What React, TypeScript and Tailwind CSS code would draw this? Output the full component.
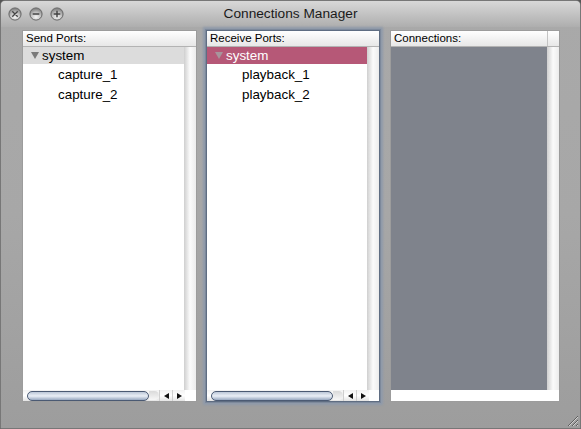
import React from 'react';

const FONT = { fontFamily: '"Liberation Sans", Arial, sans-serif' };

// graphite title bar buttons
function WinButton({ kind }: { kind: 'close' | 'min' | 'zoom' }) {
  return (
    <svg width="14" height="14" viewBox="0 0 14 14">
      <defs>
        <radialGradient id={`wb-${kind}`} cx="50%" cy="75%" r="65%">
          <stop offset="0%" stopColor="#f4f4f4" />
          <stop offset="60%" stopColor="#c0c0c0" />
          <stop offset="100%" stopColor="#888" />
        </radialGradient>
      </defs>
      <circle cx="7" cy="7" r="6.1" fill={`url(#wb-${kind})`} stroke="#5f5f5f" strokeWidth="0.9" />
      {kind === 'close' && (
        <path d="M4.7 4.7 L9.3 9.3 M9.3 4.7 L4.7 9.3" stroke="#444" strokeWidth="1.3" strokeLinecap="round" />
      )}
      {kind === 'min' && <path d="M4.2 7 H9.8" stroke="#444" strokeWidth="1.5" strokeLinecap="round" />}
      {kind === 'zoom' && (
        <path d="M4.2 7 H9.8 M7 4.2 V9.8" stroke="#444" strokeWidth="1.5" strokeLinecap="round" />
      )}
    </svg>
  );
}

const Triangle = ({ color }: { color: string }) => (
  <svg width="8" height="7" viewBox="0 0 8 7">
    <polygon points="0,0 8,0 4,7" fill={color} />
  </svg>
);

const Header = ({ label, extra }: { label: string; extra?: boolean }) => (
  <div className="flex h-[16px] shrink-0 border-b border-[#b3b3b3] bg-gradient-to-b from-white to-[#e7e7e7]">
    <div className="flex-1 pl-[3px] text-[11.5px] leading-[15px] text-black">{label}</div>
    <div className={extra ? 'w-[12px] border-l border-[#c4c4c4]' : 'w-0'} />
  </div>
);

const VStrip = () => (
  <div className="w-[12px] shrink-0 bg-gradient-to-r from-[#cfcfcf] via-[#fbfbfb] to-[#ececec]" />
);

const HScroll = () => (
  <div className="flex h-[11px] shrink-0 bg-white">
    <div className="flex flex-1 items-center bg-gradient-to-b from-[#f2f2f2] via-white to-[#e4e4e4] pl-[4px]">
      <div className="h-[10px] w-[122px] rounded-full border border-[#4b5a73] bg-gradient-to-b from-[#bcc7d8] via-[#eaeff6] to-[#98a8c0]" />
      <div className="h-[9px] w-[10px] rounded-r-full bg-gradient-to-b from-[#dadada] to-[#f7f7f7]" />
      <div className="flex-1" />
      <div className="flex h-full w-[13px] items-center justify-center border-l border-[#cfcfcf]">
        <svg width="5" height="6" viewBox="0 0 5 6">
          <polygon points="5,0 5,6 0,3" fill="#111" />
        </svg>
      </div>
      <div className="flex h-full w-[13px] items-center justify-center border-l border-[#cfcfcf]">
        <svg width="5" height="6" viewBox="0 0 5 6">
          <polygon points="0,0 0,6 5,3" fill="#111" />
        </svg>
      </div>
    </div>
    <div className="w-[12px] bg-white" />
  </div>
);

function PortPanel({
  label,
  items,
  selected,
}: {
  label: string;
  items: string[];
  selected?: boolean;
}) {
  return (
    <div className="flex h-full flex-col bg-white">
      <Header label={label} />
      <div className="flex flex-1">
        <div className="flex-1 bg-white text-[13.4px] text-black">
          <div
            className={`flex h-[17px] items-center pl-[8px] ${
              selected ? 'bg-[#b65877] text-white' : 'bg-[#dcdcdc]'
            }`}
          >
            <Triangle color={selected ? '#a7959c' : '#7a7a7a'} />
            <span className="ml-[3px] leading-[17px]">system</span>
          </div>
          {items.map((it) => (
            <div key={it} className="flex h-[20px] items-center pl-[35px] pt-[1px] leading-[20px]">
              {it}
            </div>
          ))}
        </div>
        <VStrip />
      </div>
      <HScroll />
    </div>
  );
}

export default function App() {
  return (
    <div className="h-[429px] w-[581px] overflow-hidden bg-[#555]" style={FONT}>
      <div className="flex h-full flex-col overflow-hidden rounded-t-[5px] border border-[#777] bg-gradient-to-b from-[#a9a9a9] via-[#a7a7a7] to-[#9d9d9d]">
        {/* title bar */}
        <div className="grid h-[26px] shrink-0 grid-cols-[1fr_auto_1fr] items-center bg-gradient-to-b from-[#d8d8d8] to-[#aeaeae]">
          <div className="flex items-center gap-[7px] pl-[7px]">
            <WinButton kind="close" />
            <WinButton kind="min" />
            <WinButton kind="zoom" />
          </div>
          <div className="text-[13.7px] leading-[16px] text-[#1a1a1a]">Connections Manager</div>
          <div />
        </div>

        {/* panels */}
        <div className="box-content flex h-[372px] shrink-0 pl-[21px] pt-[3px]">
          <div className="h-[372px] w-[175px] border border-[#9c9c9c]">
            <PortPanel label="Send Ports:" items={['capture_1', 'capture_2']} />
          </div>
          <div className="ml-[9px] h-[372px] w-[174px] border border-[#5f6d82] shadow-[0_0_0_1px_#7d899b,0_0_2px_3px_#8f9aaa]">
            <PortPanel label="Receive Ports:" items={['playback_1', 'playback_2']} selected />
          </div>
          <div className="ml-[10px] flex h-[372px] w-[170px] flex-col border border-[#9c9c9c] bg-white">
            <Header label="Connections:" extra />
            <div className="flex flex-1">
              <div className="flex-1 bg-[#7f838c]" />
              <VStrip />
            </div>
            <div className="h-[11px] shrink-0 bg-white" />
          </div>
        </div>

        {/* bottom with resize grip */}
        <div className="flex flex-1 items-end justify-end pb-[1px] pr-[1px]">
          <svg width="14" height="14" viewBox="0 0 14 14">
            <path d="M13 3 L3 13 M13 7 L7 13 M13 11 L11 13" stroke="#5e5e5e" strokeWidth="1" />
            <path d="M13 4 L4 13 M13 8 L8 13 M13 12 L12 13" stroke="#d0d0d0" strokeWidth="1" />
          </svg>
        </div>
      </div>
    </div>
  );
}
